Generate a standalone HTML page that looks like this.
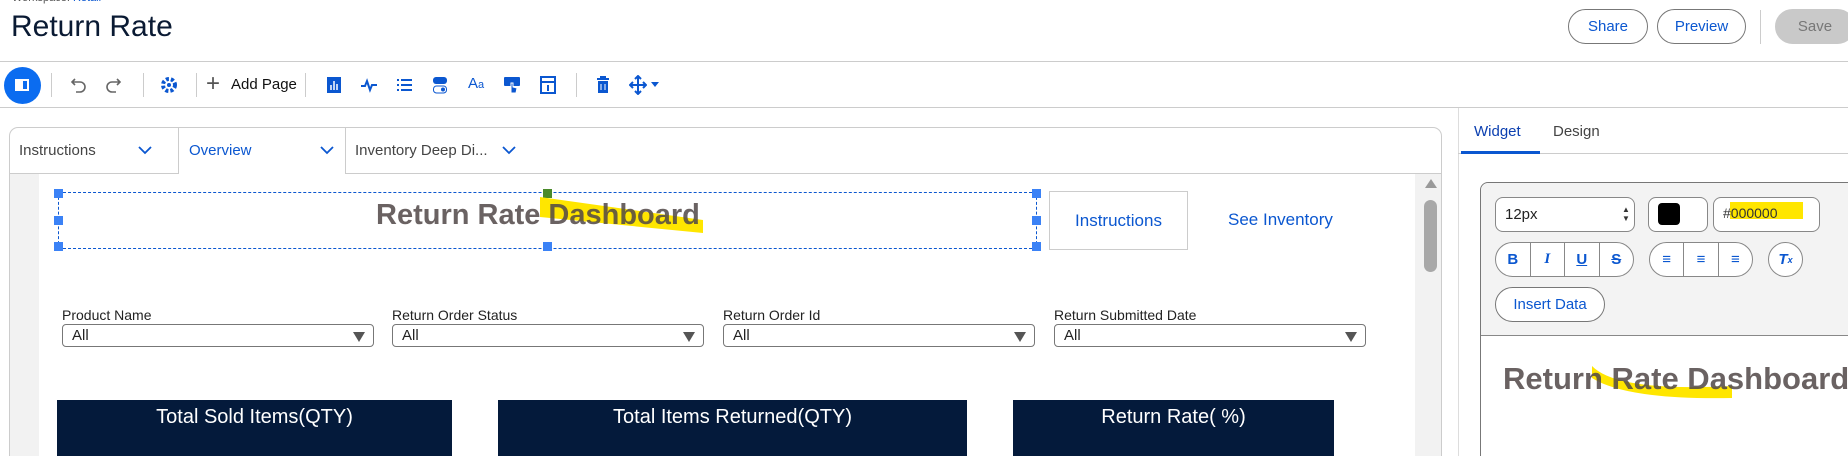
<!DOCTYPE html>
<html style="width:1848px;height:456px;overflow:hidden"><head><meta charset="utf-8">
<style>
*{box-sizing:border-box;margin:0;padding:0}
body{width:1848px;height:456px;overflow:hidden;background:#fff;font-family:"Liberation Sans",sans-serif;position:relative;color:#222}
.a{position:absolute}
.btn{position:absolute;border:1px solid #777;border-radius:18px;color:#0b57d0;font-size:15px;display:flex;align-items:center;justify-content:center;background:#fff}
.sep{position:absolute;top:73px;width:1px;height:24px;background:#ccc}
.ic{position:absolute;top:75px}
.h{position:absolute;width:9px;height:9px;background:#3b82f6}
.lbl{position:absolute;top:307px;font-size:14px;color:#222}
.sel{position:absolute;top:324px;height:23px;width:312px;border:1px solid #777;border-radius:4px;font-size:15px;padding-left:9px;line-height:21px}
.sel:after{content:"";position:absolute;right:8px;top:7px;border-left:6px solid transparent;border-right:6px solid transparent;border-top:10px solid #555}
.tile{position:absolute;top:400px;height:56px;background:#041a3b;color:#fff;font-size:20px;text-align:center;padding-top:6px}
.fb{position:absolute;border:1px solid #888;border-radius:18px;background:#fff;display:flex;overflow:hidden}
.fb span{flex:1;border-right:1px solid #888;display:flex;align-items:center;justify-content:center;color:#0b57d0;font-size:15px;font-weight:bold}
.fb span:last-child{border-right:none}
</style></head><body>
<div class="a" style="left:12px;top:-8px;font-size:11px;color:#555">Workspace: <span style="color:#0b57d0">Retail</span></div>
<div class="a" style="left:11px;top:10px;font-size:30px;color:#0a1a33">Return Rate</div>
<div class="btn" style="left:1568px;top:9px;width:80px;height:35px">Share</div>
<div class="btn" style="left:1657px;top:9px;width:89px;height:35px">Preview</div>
<div class="a" style="left:1760px;top:10px;width:1px;height:34px;background:#ccc"></div>
<div class="btn" style="left:1775px;top:9px;width:80px;height:35px;background:#c9c9c9;border-color:#c9c9c9;color:#777">Save</div>
<div class="a" style="left:0;top:61px;width:1848px;height:1px;background:#ccc"></div>
<div class="a" style="left:0;top:107px;width:1848px;height:1px;background:#ccc"></div>
<!-- toolbar -->
<div class="a" style="left:4px;top:67px;width:37px;height:37px;border-radius:50%;background:#0b6cf0"></div>
<div class="a" style="left:15px;top:79px;width:14px;height:12px;border:2px solid #fff;background:#0b6cf0"><div style="position:absolute;left:0;top:0;width:6px;height:8px;background:#fff"></div></div>
<div class="sep" style="left:51px"></div>
<svg class="ic" style="left:70px" width="18" height="20" viewBox="0 0 18 20"><path d="M5 4 L2 7 L5 10 M2 7 H10 a5 5 0 0 1 0 10 H6" fill="none" stroke="#666" stroke-width="1.6"/></svg>
<svg class="ic" style="left:104px" width="18" height="20" viewBox="0 0 18 20"><path d="M13 4 L16 7 L13 10 M16 7 H8 a5 5 0 0 0 0 10 H12" fill="none" stroke="#666" stroke-width="1.6"/></svg>
<div class="sep" style="left:143px"></div>
<svg class="ic" style="left:160px" width="18" height="20" viewBox="0 0 18 20"><circle cx="9" cy="10" r="6" fill="none" stroke="#0b57d0" stroke-width="4" stroke-dasharray="3 2"/><circle cx="9" cy="10" r="2" fill="#0b57d0"/></svg>
<div class="sep" style="left:196px"></div>
<div class="a" style="left:206px;top:72px;font-size:24px;color:#555;line-height:24px">+</div>
<div class="a" style="left:231px;top:76px;font-size:15px;color:#111">Add Page</div>
<div class="sep" style="left:305px"></div>
<svg class="ic" style="left:325px" width="18" height="20" viewBox="0 0 18 20"><rect x="2" y="2" width="14" height="16" fill="#0b57d0"/><path d="M6 15V10M9 15V6M12 15V9" stroke="#fff" stroke-width="1.5"/></svg>
<svg class="ic" style="left:360px" width="18" height="20" viewBox="0 0 18 20"><path d="M1 11H5L7 6L10 15L12 10H17" fill="none" stroke="#0b57d0" stroke-width="2"/></svg>
<svg class="ic" style="left:395px" width="18" height="20" viewBox="0 0 18 20"><path d="M2 5h2M6 5h11M2 10h2M6 10h11M2 15h2M6 15h11" stroke="#0b57d0" stroke-width="2"/></svg>
<svg class="ic" style="left:431px" width="18" height="20" viewBox="0 0 18 20"><rect x="2" y="2" width="14" height="7" rx="3" fill="#0b57d0"/><rect x="2.5" y="11" width="13" height="7" rx="3" fill="none" stroke="#0b57d0"/><circle cx="12" cy="14.5" r="2" fill="#0b57d0"/></svg>
<div class="a" style="left:468px;top:75px;font-size:15px;color:#0b57d0">A<span style="font-size:11px">a</span></div>
<svg class="ic" style="left:503px" width="18" height="20" viewBox="0 0 18 20"><rect x="1" y="2" width="16" height="9" rx="1" fill="#0b57d0"/><path d="M8 8v10h5l1-5-4-1V8z" fill="#0b57d0" stroke="#fff"/></svg>
<svg class="ic" style="left:539px" width="18" height="20" viewBox="0 0 18 20"><rect x="2" y="2" width="14" height="16" fill="none" stroke="#0b57d0" stroke-width="2"/><path d="M2 7h14M9 10v6" stroke="#0b57d0" stroke-width="2"/></svg>
<div class="sep" style="left:576px"></div>
<svg class="ic" style="left:594px" width="18" height="20" viewBox="0 0 18 20"><path d="M3 4h12M7 4V2h4v2" stroke="#0b57d0" stroke-width="2" fill="none"/><rect x="4" y="6" width="10" height="12" fill="#0b57d0"/><path d="M7 9v6M11 9v6" stroke="#fff"/></svg>
<svg class="ic" style="left:629px" width="18" height="20" viewBox="0 0 18 20"><path d="M9 1v18M1 10h16M6 4l3-3 3 3M6 16l3 3 3-3M4 7l-3 3 3 3M14 7l3 3-3 3" stroke="#0b57d0" stroke-width="2" fill="none"/></svg>
<div class="a" style="left:651px;top:82px;border-left:4px solid transparent;border-right:4px solid transparent;border-top:5px solid #0b57d0"></div>
<!-- canvas panel -->
<div class="a" style="left:9px;top:127px;width:1433px;height:329px;border:1px solid #ccc;border-bottom:none;border-radius:9px 9px 0 0;overflow:hidden">
 <div class="a" style="left:0;top:45px;width:1433px;height:1px;background:#ccc"></div>
 <div class="a" style="left:168px;top:0;width:168px;height:46px;background:#fff;border-right:1px solid #ccc;border-left:1px solid #ccc"></div>
 <div class="a" style="left:9px;top:14px;font-size:15px;color:#444">Instructions</div>
 <div class="a" style="left:179px;top:14px;font-size:15px;color:#0b57d0">Overview</div>
 <div class="a" style="left:345px;top:14px;font-size:15px;color:#444">Inventory Deep Di...</div>
 <svg class="a" style="left:128px;top:17px" width="14" height="10"><path d="M1 2l6 6 6-6" stroke="#0b57d0" stroke-width="1.8" fill="none"/></svg>
 <svg class="a" style="left:310px;top:17px" width="14" height="10"><path d="M1 2l6 6 6-6" stroke="#0b57d0" stroke-width="1.8" fill="none"/></svg>
 <svg class="a" style="left:492px;top:17px" width="14" height="10"><path d="M1 2l6 6 6-6" stroke="#0b57d0" stroke-width="1.8" fill="none"/></svg>
 <div class="a" style="left:0;top:46px;width:29px;height:300px;background:#f2f2f2"></div>
 <div class="a" style="left:1405px;top:46px;width:28px;height:300px;background:#f2f2f2"></div>
 <div class="a" style="left:1415px;top:51px;border-left:6px solid transparent;border-right:6px solid transparent;border-bottom:9px solid #999"></div>
 <div class="a" style="left:1414px;top:72px;width:13px;height:72px;border-radius:7px;background:#a8a8a8"></div>
</div>
<!-- selected widget -->
<div class="a" style="left:58px;top:192px;width:979px;height:57px;border:1.5px dashed #0b57d0"></div>
<div class="h" style="left:54px;top:189px"></div><div class="h" style="left:54px;top:216px"></div><div class="h" style="left:54px;top:242px"></div>
<div class="h" style="left:1032px;top:189px"></div><div class="h" style="left:1032px;top:216px"></div><div class="h" style="left:1032px;top:242px"></div>
<div class="h" style="left:543px;top:242px"></div><div class="h" style="left:543px;top:189px;background:#4a8a2a"></div>
<svg class="a" style="left:538px;top:195px" width="170" height="40"><path d="M2 2 L165 25 L165 38 L2 22Z" fill="#ffe600"/></svg>
<div class="a" style="left:376px;top:199px;font-size:29px;font-weight:bold;color:rgba(80,70,70,.85)">Return Rate Dashboard</div>
<div class="a" style="left:1049px;top:191px;width:139px;height:59px;border:1px solid #ccc;display:flex;align-items:center;justify-content:center;color:#0b57d0;font-size:17px">Instructions</div>
<div class="a" style="left:1228px;top:210px;font-size:17px;color:#0b57d0">See Inventory</div>
<div class="lbl" style="left:62px">Product Name</div>
<div class="lbl" style="left:392px">Return Order Status</div>
<div class="lbl" style="left:723px">Return Order Id</div>
<div class="lbl" style="left:1054px">Return Submitted Date</div>
<div class="sel" style="left:62px">All</div>
<div class="sel" style="left:392px">All</div>
<div class="sel" style="left:723px">All</div>
<div class="sel" style="left:1054px">All</div>
<div class="tile" style="left:57px;width:395px">Total Sold Items(QTY)</div>
<div class="tile" style="left:498px;width:469px">Total Items Returned(QTY)</div>
<div class="tile" style="left:1013px;width:321px">Return Rate( %)</div>
<!-- right panel -->
<div class="a" style="left:1458px;top:108px;width:1px;height:348px;background:#ddd"></div>
<div class="a" style="left:1458px;top:153px;width:390px;height:1px;background:#ccc"></div>
<div class="a" style="left:1474px;top:123px;font-size:15px;color:#0b3fb0">Widget</div>
<div class="a" style="left:1553px;top:123px;font-size:15px;color:#444">Design</div>
<div class="a" style="left:1461px;top:151px;width:79px;height:3px;background:#0b57d0"></div>
<div class="a" style="left:1480px;top:182px;width:380px;height:290px;border:1px solid #777;border-radius:8px 0 0 0;background:#fff"></div>
<div class="a" style="left:1481px;top:183px;width:370px;height:153px;background:#f3f3f3;border-bottom:1px solid #888;border-radius:8px 0 0 0"></div>
<div class="a" style="left:1495px;top:197px;width:140px;height:35px;border:1px solid #888;border-radius:8px;background:#fff;font-size:15px;padding:8px 9px">12px</div>
<div class="a" style="left:1622px;top:205px;font-size:8px;color:#333;line-height:9px">▲<br>▼</div>
<div class="a" style="left:1648px;top:197px;width:60px;height:35px;border:1px solid #888;border-radius:8px;background:#fff"></div>
<div class="a" style="left:1658px;top:203px;width:22px;height:22px;border-radius:4px;background:#000"></div>
<div class="a" style="left:1713px;top:197px;width:107px;height:35px;border:1px solid #888;border-radius:8px;background:#fff"></div>
<div class="a" style="left:1730px;top:202px;width:73px;height:17px;background:#ffe600"></div>
<div class="a" style="left:1723px;top:205px;font-size:14px;color:#333">#000000</div>
<div class="fb" style="left:1495px;top:242px;width:139px;height:35px"><span>B</span><span style="font-style:italic;font-family:'Liberation Serif',serif">I</span><span style="text-decoration:underline">U</span><span style="text-decoration:line-through">S</span></div>
<div class="fb" style="left:1649px;top:242px;width:104px;height:35px"><span>≡</span><span>≡</span><span>≡</span></div>
<div class="fb" style="left:1768px;top:242px;width:35px;height:35px"><span style="font-style:italic">T<sub style="font-size:9px">x</sub></span></div>
<div class="btn" style="left:1495px;top:287px;width:110px;height:35px">Insert Data</div>
<svg class="a" style="left:1587px;top:364px" width="150" height="40"><path d="M5 2 Q30 28 145 22 L145 34 Q40 36 5 14Z" fill="#ffe600"/></svg>
<div class="a" style="left:1503px;top:361px;font-size:31px;font-weight:bold;color:rgba(80,70,70,.85);white-space:nowrap">Return Rate Dashboard</div>
</body></html>
